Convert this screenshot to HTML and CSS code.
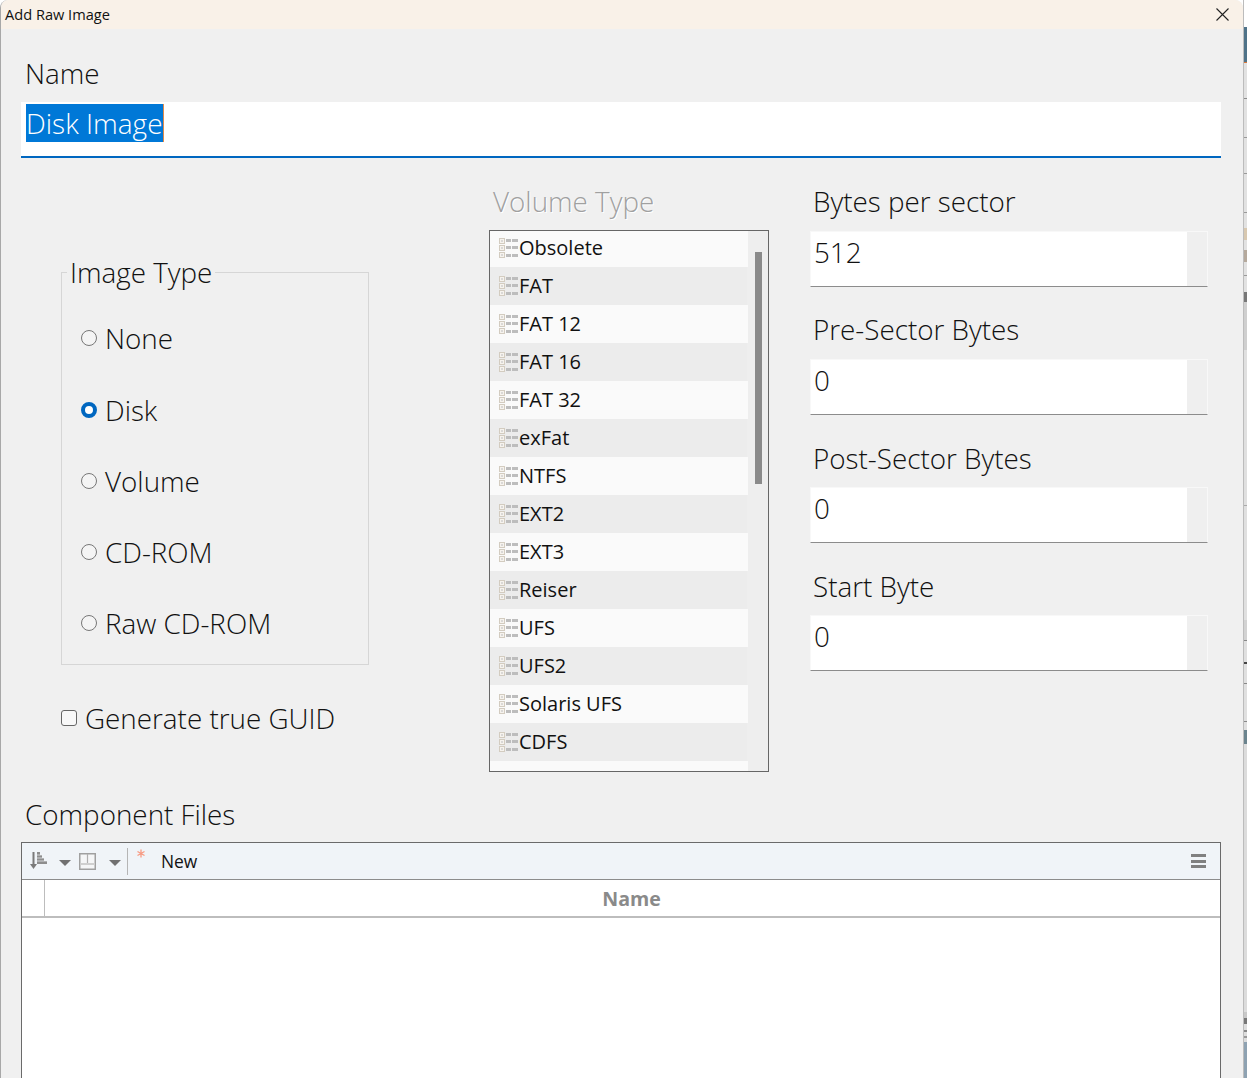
FILE: index.html
```html
<!DOCTYPE html>
<html lang="en">
<head>
    <meta charset="UTF-8">
    <title>Add Raw Image</title>
    <link rel="stylesheet" href="styles.css">
</head>
<body>
    <svg class="defs" width="0" height="0">
        <symbol id="rowIcon" viewBox="0 0 20 20">
            <g fill="#f6f3ee" stroke="#d3ccc0">
                <rect x="0.5" y="0.5" width="5" height="5"/>
                <rect x="0.5" y="7.5" width="5" height="5"/>
                <rect x="0.5" y="14.5" width="5" height="5"/>
            </g>
            <g fill="#bdbdbd">
                <rect x="2" y="2.5" width="2" height="1"/>
                <rect x="2" y="9.5" width="2" height="1"/>
                <rect x="2" y="16.5" width="2" height="1"/>
                <rect x="7" y="1" width="5" height="3"/>
                <rect x="13" y="1" width="6" height="3"/>
                <rect x="7" y="8" width="5" height="3"/>
                <rect x="13" y="8" width="6" height="3"/>
                <rect x="7" y="16" width="5" height="3"/>
                <rect x="13" y="16" width="6" height="3"/>
            </g>
        </symbol>
    </svg>

    <div class="dialog">
        <div class="titleBar">
            <span>Add Raw Image</span>
            <svg class="closeIcon" width="13" height="13" viewBox="0 0 13 13">
                <path d="M0.5 0.5L12.5 12.5M12.5 0.5L0.5 12.5" stroke="#222" stroke-width="1.1" fill="none"/>
            </svg>
        </div>

        <div class="content">
            <div class="label nameLabel">Name</div>
            <div class="nameInput"><span class="selected">Disk Image</span></div>

            <div class="columns">
                <div class="leftCol">
                    <fieldset class="imageType">
                        <legend>Image Type</legend>
                        <label class="option"><input type="radio" name="imageType">None</label>
                        <label class="option"><input type="radio" name="imageType" checked>Disk</label>
                        <label class="option"><input type="radio" name="imageType">Volume</label>
                        <label class="option"><input type="radio" name="imageType">CD-ROM</label>
                        <label class="option"><input type="radio" name="imageType">Raw CD-ROM</label>
                    </fieldset>
                    <label class="guid"><input type="checkbox">Generate true GUID</label>
                </div>

                <div class="midCol">
                    <div class="label disabled">Volume Type</div>
                    <div class="listBox">
                        <ul class="rows">
                            <li><svg class="rowIcon"><use href="#rowIcon"/></svg>Obsolete</li>
                            <li><svg class="rowIcon"><use href="#rowIcon"/></svg>FAT</li>
                            <li><svg class="rowIcon"><use href="#rowIcon"/></svg>FAT 12</li>
                            <li><svg class="rowIcon"><use href="#rowIcon"/></svg>FAT 16</li>
                            <li><svg class="rowIcon"><use href="#rowIcon"/></svg>FAT 32</li>
                            <li><svg class="rowIcon"><use href="#rowIcon"/></svg>exFat</li>
                            <li><svg class="rowIcon"><use href="#rowIcon"/></svg>NTFS</li>
                            <li><svg class="rowIcon"><use href="#rowIcon"/></svg>EXT2</li>
                            <li><svg class="rowIcon"><use href="#rowIcon"/></svg>EXT3</li>
                            <li><svg class="rowIcon"><use href="#rowIcon"/></svg>Reiser</li>
                            <li><svg class="rowIcon"><use href="#rowIcon"/></svg>UFS</li>
                            <li><svg class="rowIcon"><use href="#rowIcon"/></svg>UFS2</li>
                            <li><svg class="rowIcon"><use href="#rowIcon"/></svg>Solaris UFS</li>
                            <li><svg class="rowIcon"><use href="#rowIcon"/></svg>CDFS</li>
                            <li></li>
                        </ul>
                        <div class="scrollThumb"></div>
                    </div>
                </div>

                <div class="rightCol">
                    <div class="field">
                        <div class="label">Bytes per sector</div>
                        <div class="numInput"><span>512</span><i></i></div>
                    </div>
                    <div class="field">
                        <div class="label">Pre-Sector Bytes</div>
                        <div class="numInput"><span>0</span><i></i></div>
                    </div>
                    <div class="field">
                        <div class="label">Post-Sector Bytes</div>
                        <div class="numInput"><span>0</span><i></i></div>
                    </div>
                    <div class="field">
                        <div class="label">Start Byte</div>
                        <div class="numInput"><span>0</span><i></i></div>
                    </div>
                </div>
            </div>

            <div class="label filesLabel">Component Files</div>
            <div class="filesBox">
                <div class="toolbar">
                    <svg class="toolIcon" width="17" height="18" viewBox="0 0 17 18">
                        <path d="M3.5 0V14" stroke="#7a7a7a" stroke-width="2"/>
                        <path d="M0 12L3.5 17L7 12Z" fill="#7a7a7a"/>
                        <path d="M7 0H10V3H12V6H14V9H17V12H7Z" fill="#8e8e8e"/>
                        <path d="M7 3H12M7 6H14M7 9H17" stroke="#f0f4f8" stroke-width="0.7"/>
                    </svg>
                    <span class="caret"></span>
                    <svg class="toolIcon layoutIcon" width="17" height="17" viewBox="0 0 17 17">
                        <rect x="0.75" y="0.75" width="15.5" height="15.5" fill="#f5f6f7" stroke="#a0a0a0" stroke-width="1.5"/>
                        <path d="M8.5 1V10" stroke="#b0b0b0" stroke-width="1.2"/>
                        <path d="M1 11H16" stroke="#cfcfcf" stroke-width="2"/>
                    </svg>
                    <span class="caret"></span>
                    <span class="toolSep"></span>
                    <svg class="newIcon" width="8" height="9" viewBox="0 0 8 9">
                        <path d="M4 0.5V8.5M0.5 2.5L7.5 6.5M7.5 2.5L0.5 6.5" stroke="#f79a82" stroke-width="1.3"/>
                    </svg>
                    <span class="newText">New</span>
                    <span class="menuIcon"><b></b><b></b><b></b></span>
                </div>
                <div class="tableHead">
                    <div class="headCorner"></div>
                    <div class="headName">Name</div>
                </div>
                <div class="tableBody"></div>
            </div>
        </div>
    </div>

    <div class="sliver"></div>
</body>
</html>
```

FILE: styles.css
```css
* {
    box-sizing: border-box;
}
html, body {
    margin: 0;
    height: 1078px;
    overflow: hidden;
    background-color: #fff;
}
body {
    display: flex;
    font-family: "Open Sans", sans-serif;
    color: #111;
}
.defs {
    position: absolute;
}
.dialog {
    width: 1243px;
    height: 1078px;
    flex: none;
    overflow: hidden;
    background-color: #f0f0f0;
    border-left: 1px solid #a8a8a8;
    border-radius: 8px 8px 0 0;
}
.titleBar {
    height: 29px;
    background-color: #f9f1e8;
    display: flex;
    align-items: center;
    justify-content: space-between;
    padding: 0 14px 0 4px;
    font-size: 14.6px;
}
.titleBar span {
    line-height: 18px;
    margin-top: -2px;
}
.content {
    padding: 0 22px 0 20px;
}
.label {
    height: 36px;
    line-height: 34px;
    font-size: 27.8px;
    font-weight: 300;
    padding-left: 4px;
    white-space: nowrap;
}
.nameLabel {
    margin-top: 27px;
    margin-bottom: 10px;
}
.nameInput {
    height: 56px;
    background-color: #fff;
    border-bottom: 2px solid #0067c0;
    padding: 2px 0 0 5px;
}
.selected {
    display: inline-block;
    height: 38px;
    line-height: 38px;
    font-size: 28px;
    font-weight: 300;
    color: #fff;
    background-color: #0078d7;
    border-right: 1px solid #e08a4a;
}
.columns {
    display: flex;
    margin-top: 26px;
}
.leftCol {
    width: 468px;
    flex: none;
    padding-left: 40px;
    padding-top: 70px;
}
.imageType {
    width: 308px;
    margin: 0;
    padding: 12px 0 6px 19px;
    border: 1px solid #d6d6d6;
}
.imageType legend {
    margin-left: -14px;
    padding: 0 3px;
    height: 36px;
    line-height: 36px;
    font-size: 27.8px;
    font-weight: 300;
}
.option {
    display: flex;
    align-items: center;
    height: 71px;
    font-size: 27.8px;
    font-weight: 300;
}
.option:first-of-type {
    height: 72px;
}
.option input {
    appearance: none;
    width: 16px;
    height: 16px;
    margin: 0 8px 0 0;
    border: 1px solid #777;
    border-radius: 50%;
    background-color: #f4f4f4;
}
.option input:checked {
    border: 4.5px solid #0067c0;
    background-color: #fff;
}
.guid {
    display: flex;
    align-items: center;
    height: 36px;
    margin-top: 35px;
    font-size: 27.8px;
    font-weight: 300;
}
.guid input {
    appearance: none;
    width: 16px;
    height: 16px;
    margin: 0 8px 0 0;
    border: 1px solid #666;
    border-radius: 3px;
    background-color: #f8f8f8;
}
.midCol {
    width: 280px;
    flex: none;
}
.disabled {
    color: #a0a0a0;
    text-shadow: 1px 1px 0 #fff;
}
.midCol .label {
    margin-bottom: 10px;
}
.listBox {
    position: relative;
    height: 542px;
    overflow: hidden;
    border: 1px solid #666;
    background-color: #eee;
}
.rows {
    list-style: none;
    margin: -2px 0 0;
    padding: 0;
    width: 258px;
}
.rows li {
    display: flex;
    align-items: center;
    height: 38px;
    padding: 0 0 2px 9px;
    font-size: 20px;
    background-color: #fafafa;
}
.rows li:nth-child(even) {
    background-color: #ececec;
    margin-right: 1px;
}
.rowIcon {
    width: 20px;
    height: 20px;
    margin-top: 2px;
    flex: none;
}
.scrollThumb {
    position: absolute;
    left: 265px;
    top: 21px;
    width: 7px;
    height: 232px;
    background-color: #8a8a8a;
}
.rightCol {
    width: 398px;
    margin-left: 41px;
    flex: none;
}
.field {
    margin-bottom: 25px;
}
.field .label {
    margin-bottom: 11px;
    padding-left: 3px;
}
.field:nth-child(n+3) .label {
    line-height: 36px;
}
.numInput {
    display: flex;
    height: 56px;
    background-color: #fff;
    border: 1px solid #f8f8f8;
    border-bottom: 1px solid #8c8c8c;
    font-size: 27.8px;
    font-weight: 300;
    line-height: 40px;
}
.numInput span {
    flex: 1;
    padding-left: 3px;
}
.numInput i {
    width: 20px;
    background-color: #efefef;
}
.filesLabel {
    margin-top: 25px;
    margin-bottom: 9px;
}
.filesBox {
    height: 400px;
    background-color: #fff;
    border: 1px solid #6a6a6a;
}
.toolbar {
    display: flex;
    align-items: center;
    height: 37px;
    background-color: #f0f4f8;
    border-bottom: 1px solid #8c8c8c;
    padding-left: 8px;
    padding-right: 14px;
}
.toolIcon {
    flex: none;
}
.layoutIcon {
    margin-left: 8px;
    margin-right: 1px;
}
.caret {
    width: 0;
    height: 0;
    margin-left: 12px;
    border-left: 6px solid transparent;
    border-right: 6px solid transparent;
    border-top: 6px solid #707070;
    margin-top: 3px;
}
.toolSep {
    width: 1px;
    height: 27px;
    margin-left: 6px;
    background-color: #b5b5b5;
}
.newIcon {
    margin-left: 9px;
    margin-top: -16px;
}
.newText {
    margin-left: 16px;
    font-size: 17.4px;
}
.menuIcon {
    margin-left: auto;
    width: 15px;
    display: flex;
    flex-direction: column;
    gap: 2.5px;
}
.menuIcon b {
    height: 3px;
    background-color: #808080;
}
.tableHead {
    display: flex;
    height: 38px;
    border-bottom: 2px solid #bdbdbd;
}
.headCorner {
    width: 23px;
    flex: none;
    border-right: 1px solid #bdbdbd;
}
.headName {
    flex: 1;
    text-align: center;
    line-height: 38px;
    font-size: 19.6px;
    font-weight: 700;
    color: #8a8a8a;
    padding-right: 2px;
}
/* sliver of the window behind the dialog */
.sliver {
    flex: 1;
    border-left: 1px solid #bcbcbc;
    background: linear-gradient(#fff 0 27px,
        #4f7389 27px 62px, #d9783a 62px 63px,
        #e2e2e2 63px 98px, #8c8c8c 98px 99px,
        #e2e2e2 99px 137px, #999 137px 138px,
        #e2e2e2 138px 173px, #999 173px 174px,
        #e2e2e2 174px 212px, #999 212px 213px,
        #e2e2e2 213px 228px, #d8c8b0 228px 240px,
        #e2e2e2 240px 250px, #b5a99c 250px 262px,
        #e2e2e2 262px 275px, #999 275px 276px,
        #e2e2e2 276px 292px, #777 292px 302px,
        #cfcfcf 302px 350px, #e0e0e0 350px 505px,
        #aaa 505px 506px, #e0e0e0 506px 620px,
        #d2d2d2 620px 640px, #888 640px 641px,
        #e0e0e0 641px 662px, #444 662px 664px,
        #e0e0e0 664px 683px, #888 683px 684px,
        #e0e0e0 684px 721px, #888 721px 722px,
        #e0e0e0 722px 730px, #6b848e 730px 744px,
        #dcdcdc 744px 1012px, #c8c8c8 1012px 1018px,
        #777 1018px 1024px, #ddd 1024px 1030px,
        #888 1030px 1032px, #ddd 1032px 1036px,
        #999 1036px 1038px, #ddd 1038px 1042px,
        #8ea2b2 1042px);
}
```
